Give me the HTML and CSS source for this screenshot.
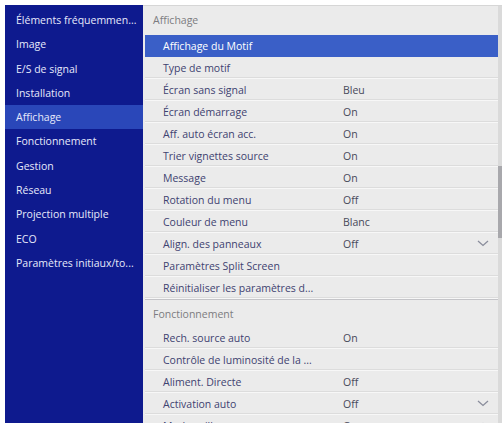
FILE: index.html
```html
<!DOCTYPE html>
<html lang="fr">
<head>
<meta charset="utf-8">
<title>Affichage</title>
<link rel="stylesheet" href="styles.css">
</head>
<body>
<div class="frame">
  <nav class="side">
    <div class="side-item">Éléments fréquemmen...</div>
    <div class="side-item">Image</div>
    <div class="side-item">E/S de signal</div>
    <div class="side-item">Installation</div>
    <div class="side-item active">Affichage</div>
    <div class="side-item">Fonctionnement</div>
    <div class="side-item">Gestion</div>
    <div class="side-item">Réseau</div>
    <div class="side-item">Projection multiple</div>
    <div class="side-item">ECO</div>
    <div class="side-item">Paramètres initiaux/to...</div>
  </nav>
  <div class="main">
    <div class="content">
      <div class="sec-head">Affichage</div>
      <div class="row sel"><span class="label">Affichage du Motif</span></div>
      <div class="row"><span class="label">Type de motif</span></div>
      <div class="row"><span class="label">Écran sans signal</span><span class="value">Bleu</span></div>
      <div class="row"><span class="label">Écran démarrage</span><span class="value">On</span></div>
      <div class="row"><span class="label">Aff. auto écran acc.</span><span class="value">On</span></div>
      <div class="row"><span class="label">Trier vignettes source</span><span class="value">On</span></div>
      <div class="row"><span class="label">Message</span><span class="value">On</span></div>
      <div class="row"><span class="label">Rotation du menu</span><span class="value">Off</span></div>
      <div class="row"><span class="label">Couleur de menu</span><span class="value">Blanc</span></div>
      <div class="row"><span class="label">Align. des panneaux</span><span class="value">Off</span>
        <svg class="chev" width="12" height="7" viewBox="0 0 12 7"><path d="M1 1 L6 5.5 L11 1" fill="none" stroke="#8a8d9c" stroke-width="1.3"/></svg></div>
      <div class="row"><span class="label">Paramètres Split Screen</span></div>
      <div class="row"><span class="label">Réinitialiser les paramètres d...</span></div>
      <div class="sec-head sep">Fonctionnement</div>
      <div class="row"><span class="label">Rech. source auto</span><span class="value">On</span></div>
      <div class="row"><span class="label">Contrôle de luminosité de la ...</span></div>
      <div class="row"><span class="label">Aliment. Directe</span><span class="value">Off</span></div>
      <div class="row"><span class="label">Activation auto</span><span class="value">Off</span>
        <svg class="chev" width="12" height="7" viewBox="0 0 12 7"><path d="M1 1 L6 5.5 L11 1" fill="none" stroke="#8a8d9c" stroke-width="1.3"/></svg></div>
      <div class="row"><span class="label">Mode veille</span><span class="value">On</span>
        <svg class="chev" width="12" height="7" viewBox="0 0 12 7"><path d="M1 6 L6 1.5 L11 6" fill="none" stroke="#8a8d9c" stroke-width="1.3"/></svg></div>
    </div>
    <div class="scrollbar"><div class="thumb"></div></div>
  </div>
</div>
</body>
</html>
```
FILE: styles.css
```css
html, body {
  margin: 0;
  padding: 0;
  background: #ffffff;
}
body {
  font-family: "Open Sans", "Noto Sans", sans-serif;
  font-size: 10.5px;
  overflow: hidden;
}
.frame {
  display: flex;
  margin: 5px 0 0 5px;
  width: 497px;
  height: 418px;
  overflow: hidden;
}
.side {
  width: 138px;
  flex: none;
  background: #0e1a8e;
  padding-top: 3px;
  box-sizing: border-box;
}
.side-item {
  height: 24.3px;
  line-height: 24.3px;
  padding-left: 11px;
  color: #e6e9fb;
  white-space: nowrap;
  overflow: hidden;
}
.side-item.active {
  background: #2a47b9;
}
.main {
  flex: 1;
  display: flex;
  background: #ebebeb;
  border-top: 1px solid #d6d6d6;
  padding-left: 2px;
}
.content {
  flex: 1;
  display: flex;
  flex-direction: column;
}
.sec-head {
  height: 29px;
  line-height: 29px;
  padding-left: 8px;
  color: #7c7c80;
  flex: none;
}
.sec-head.sep {
  height: 27px;
  line-height: 28px;
  border-top: 1px solid #c4c4c8;
}
.row {
  flex: none;
  height: 22px;
  box-sizing: border-box;
  display: flex;
  align-items: center;
  border-bottom: 1px solid #f7f7f7;
  box-shadow: inset 0 -2px 0 -1px #dcdcdc;
  color: #3e4270;
}
.row.sel {
  background: #3a5fc7;
  color: #ffffff;
  border-bottom-color: #3a5fc7;
  box-shadow: none;
}
.label {
  width: 180px;
  padding-left: 18px;
  white-space: nowrap;
  overflow: hidden;
}
.value {
  color: #48495a;
}
.chev {
  margin-left: auto;
  margin-right: 9px;
}
.scrollbar {
  width: 4px;
  flex: none;
  background: #dadada;
}
.thumb {
  margin-top: 160px;
  height: 72px;
  background: #a8a8ac;
}
```
